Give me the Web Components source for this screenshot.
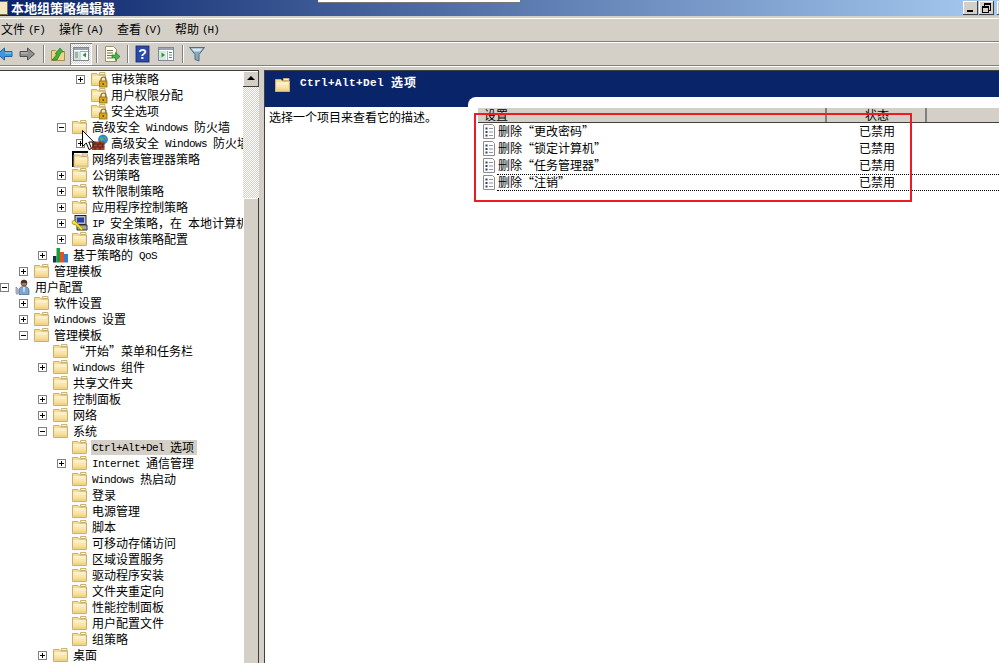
<!DOCTYPE html>
<html lang="zh-CN">
<head>
<meta charset="utf-8">
<title>本地组策略编辑器</title>
<style>
  html, body { margin: 0; height: 100%; overflow: hidden; background: #d4d0c8; }
  body { font: 12px "Noto Sans CJK SC", sans-serif; color: #000; }
</style>
</head>
<body>
<gp-app></gp-app>

<script>
const UI_FONT = `"Noto Sans CJK SC", sans-serif`;
const MIXED_CSS = `
  .l { font-family: "Liberation Mono", monospace; font-size: 11px; letter-spacing: -0.6px; white-space: pre; vertical-align: 1px; }
`;

// SimSun look: latin runs take half the width of a CJK glyph
const mixed = (text) => text.replace(/[\x20-\x7e]+/g, (m) => `<span class="l">${m}</span>`);

const folderBody = `
  <path d="M8.500 1.500h5.500v2H8.500z" fill="#f4f6f4" stroke="#c9b273"/>
  <path d="M.5 2.500h5.500l1.500 1.500h7v10.500H.5z" fill="#f6dd98" stroke="#c9b070"/>
  <path d="M1.500 5h12v3h-12z" fill="#fdf0c4"/>
  <path d="M1.500 8h12v2.500h-12z" fill="#fae6aa"/>
  <path d="M1.500 12.500h12v1h-12z" fill="#ecc878"/>`;

const lockBadge = `
  <path d="M10 10V8.500a2.500 2.500 0 0 1 5 0V10" fill="none" stroke="#7d6a35" stroke-width="1.200"/>
  <rect x="8.500" y="10" width="7.500" height="6" fill="#d8a51c" stroke="#8a6a14" stroke-width=".8"/>
  <rect x="11.500" y="12" width="1.500" height="2" fill="#6b4f0c"/>`;

const ICONS = {
  folder: folderBody,
  lock: folderBody + lockBadge,
  blackfolder: `<path d="M0 0h16v2H2v14H0z" fill="#000"/><g transform="translate(1.500 1.500)">${folderBody}</g>`,
  firewall: `
    <circle cx="12" cy="4.500" r="4.500" fill="#2f8fd8" stroke="#1c5f9c" stroke-width=".6"/>
    <path d="M9 3c2-1.500 3-.5 3.500 1s-2 2-3 1zM13.500 1l2 2-1.500 1z" fill="#57b84a"/>
    <path d="M1 6.500h12.500V15H1z" fill="#a2432c"/>
    <path d="M1 9h12.500M1 12h12.500M4 6.500V9M9 6.500V9M2.500 9v3M7 9v3M11.500 9v3M4 12v3M9 12v3" stroke="#5e2418" fill="none"/>`,
  ip: `
    <rect x="3" y=".5" width="11" height="9" fill="#b8b8c0" stroke="#222"/>
    <rect x="5" y="2.500" width="7" height="5" fill="#2440a8"/>
    <path d="M5 10h10v5H5z" fill="#a8a8a8" stroke="#333"/>
    <path d="M0 6.500l2-1.500 3 3 6 5.500-1.500 2-6-5.500-3-1z" fill="#f5e020" stroke="#8a7c00" stroke-width=".6"/>`,
  qos: `
    <rect x="0" y="9" width="3.500" height="6.500" fill="#16324e"/>
    <rect x="3.500" y="1" width="3.500" height="14.500" fill="#1f9b3a"/>
    <rect x="7" y="5" width="4" height="10.500" fill="#e0532a"/>
    <rect x="11" y="7" width="4" height="8.500" fill="#2f7fd0"/>`,
  user: `
    <circle cx="9" cy="4" r="3" fill="#a8795a" stroke="#4a3020" stroke-width=".7"/>
    <path d="M9 1a3 3 0 0 1 3 3H6a3 3 0 0 1 3-3z" fill="#4a3020"/>
    <path d="M4 15.500v-4c0-3 2-4 5-4s5 1 5 4v4z" fill="#7ea6d4" stroke="#41618c" stroke-width=".7"/>
    <path d="M8 8h2l-.5 5h-1z" fill="#dde7f2"/>
    <path d="M1 8l2 2v4l-1 1.500L1 14v-4z" fill="#c8ccd0" stroke="#667" stroke-width=".6"/>`,
  doc: `
    <path d="M1.500 .5h9l2 2v12h-11z" fill="#fdfdfd" stroke="#8c8c8c"/>
    <path d="M3.500 3.500h2v2h-2zM3.500 7h2v2h-2zM3.500 10.500h2v2h-2z" fill="#33405c"/>
    <path d="M7 4.500h4M7 8h4M7 11.500h4" stroke="#8b94b0" fill="none"/>`,
  back: `<path d="M.5 8l7-6v3.500h7.500v5H7.500V14z" fill="#3f96dc" stroke="#27609c"/><path d="M8 6.500h6.500v1H8z" fill="#9bd0f4"/>`,
  forward: `<path d="M15.500 8l-7-6v3.500H1v5h7.500V14z" fill="#8e8e8e" stroke="#4e4e4e"/><path d="M2 6.500h7v1H2z" fill="#c4c4c4"/>`,
  up: `
    <path d="M1.500 4.500h4l1 1h8v9h-13z" fill="#f1d48c" stroke="#a98f4e"/>
    <path d="M2 14l5-6H5l5-6 3.500 4h-2L7 14z" fill="#3fae3a" stroke="#1e7a22" stroke-width=".6"/>`,
  treepane: `
    <rect x=".5" y="1.500" width="15" height="13" fill="#fff" stroke="#7a8a96"/>
    <path d="M1 2h14v2H1z" fill="#9aa6ae"/>
    <path d="M1 5h5v9H1z" fill="#d6e4d8"/><path d="M2 7h3M2 9h3M2 11h3" stroke="#68808c"/>
    <path d="M7 5.500h8M7 5.500v9" stroke="#a0acb4" fill="none"/>
    <path d="M13 6.500v5L9.500 9z" fill="#1e9b34"/>`,
  export: `
    <path d="M1.500 .5h8l3 3v12h-11z" fill="#fdfbe8" stroke="#97917a"/>
    <path d="M3 4.500h6M3 7h6M3 9.500h5M3 12h5" stroke="#77755f" fill="none"/>
    <path d="M8 9h3.500V6.500l4.500 4-4.500 4V12H8z" fill="#47b348" stroke="#1e7a22" stroke-width=".7"/>`,
  help: `
    <rect x="2" y="0" width="13" height="16" fill="#2a4aa6" stroke="#13286c" stroke-width=".8"/>
    <text x="8.500" y="13" text-anchor="middle" font-family="Liberation Sans" font-weight="700" font-size="14" fill="#f2f4ff">?</text>`,
  panel: `
    <rect x=".5" y="1.500" width="15" height="13" fill="#fff" stroke="#7a8a96"/>
    <path d="M1 2h14v2H1z" fill="#9aa6ae"/>
    <path d="M1 5h7v9H1z" fill="#dbe6dc"/><path d="M3.500 6.500v5L7 9z" fill="#1e9b34"/>
    <path d="M9.500 5v9" stroke="#a0acb4"/><path d="M11 6.500h3M11 9h3M11 11.500h3" stroke="#68808c" fill="none"/>`,
  filter: `
    <path d="M.5 1.500h15L10 8.500V15l-4-1.500v-5z" fill="#8aa8bc" stroke="#4d6e84"/>
    <path d="M2.500 2.500h11l-2.500 3H5z" fill="#d9e6ee"/>`,
};

class GpIcon extends HTMLElement {
  connectedCallback() {
    if (this.shadowRoot) return;
    this.attachShadow({ mode: "open" });
    const size = this.getAttribute("size") || 16;
    this.shadowRoot.innerHTML = `
      <style>
        :host { display: block; width: ${size}px; height: ${size}px; flex: none; }
        svg { display: block; overflow: visible; }
      </style>
      <svg width="${size}" height="${size}" viewBox="0 0 16 16">${ICONS[this.getAttribute("name")] || ""}</svg>
    `;
  }
}
customElements.define("gp-icon", GpIcon);

class GpTitlebar extends HTMLElement {
  constructor() {
    super();
    this.attachShadow({ mode: "open" }).innerHTML = `
      <style>
        :host {
          display: flex;
          align-items: center;
          height: 16px;
          padding-left: 11px;
          position: relative;
          flex: none;
          background: linear-gradient(90deg, #0a246a, #a6caf0);
          color: #fff;
          font: 700 13px/14px ${UI_FONT};
        }
        .doc {
          position: absolute;
          left: -5px;
          top: 1px;
          width: 13px;
          height: 14px;
          background: #f3e7c2;
          box-shadow: inset 0 0 0 1px #7d6f4a;
        }
        .sliver {
          position: absolute;
          left: 318px;
          top: 0;
          width: 202px;
          height: 2px;
          background: #fff;
          box-shadow: 0 1px #777;
        }
        .buttons {
          display: flex;
          flex: none;
          margin-left: auto;
          margin-right: -13px;
          gap: 1px;
        }
        .btn {
          flex: none;
          width: 15px;
          height: 14px;
          background: #d4d0c8;
          box-shadow: inset -1px -1px #404040, inset 1px 1px #fff;
          position: relative;
        }
        .btn:last-child { margin-left: 2px; }
        .min::after { content: ""; position: absolute; left: 4px; top: 9px; width: 6px; height: 2px; background: #000; }
        .restore::before { content: ""; position: absolute; left: 5px; top: 2px; width: 5px; height: 5px; border: 1px solid #000; border-top-width: 2px; }
        .restore::after { content: ""; position: absolute; left: 3px; top: 5px; width: 5px; height: 4px; border: 1px solid #000; border-top-width: 2px; background: #d4d0c8; }
      </style>
      <span class="doc"></span>
      <span class="sliver"></span>
      <span>本地组策略编辑器</span>
      <span class="buttons">
        <span class="btn min"></span>
        <span class="btn restore"></span>
        <span class="btn"></span>
      </span>
    `;
  }
}
customElements.define("gp-titlebar", GpTitlebar);

class GpMenubar extends HTMLElement {
  constructor() {
    super();
    const items = ["文件(F)", "操作(A)", "查看(V)", "帮助(H)"];
    this.attachShadow({ mode: "open" }).innerHTML = `
      <style>
        ${MIXED_CSS}
        :host {
          display: flex;
          align-items: center;
          gap: 15px;
          height: 23px;
          padding: 2px 0 0 1px;
          flex: none;
          background: #d4d0c8;
          box-shadow: inset 0 2px #d4d0c8, inset 0 3px #fff;
          border-bottom: 1px solid #808080;
          font: 12px/15px ${UI_FONT};
        }
        span.m { width: 43px; white-space: nowrap; }
        .l { margin-left: 3px; letter-spacing: -1px; }
      </style>
      ${items.map((t) => `<span class="m">${mixed(t)}</span>`).join("")}
    `;
  }
}
customElements.define("gp-menubar", GpMenubar);

class GpToolbar extends HTMLElement {
  constructor() {
    super();
    this.attachShadow({ mode: "open" }).innerHTML = `
      <style>
        :host {
          display: flex;
          align-items: center;
          height: 22px;
          flex: none;
          background: #d4d0c8;
          border-top: 1px solid #fff;
          border-bottom: 1px solid #808080;
        }
        .sep { width: 1px; height: 18px; background: #808080; border-right: 1px solid #fff; flex: none; }
        .pressed {
          width: 22px;
          height: 22px;
          display: flex;
          align-items: center;
          justify-content: center;
          flex: none;
          background: repeating-conic-gradient(#d4d0c8 0 25%, #fff 0 50%) 0 0 / 2px 2px;
          box-shadow: inset 1px 1px #808080, inset -1px -1px #fff;
        }
      </style>
      <gp-icon name="back" style="margin-left:-3px"></gp-icon>
      <gp-icon name="forward" style="margin-left:6px"></gp-icon>
      <span class="sep" style="margin-left:8px"></span>
      <gp-icon name="up" style="margin-left:5px"></gp-icon>
      <span class="pressed" style="margin-left:4px"><gp-icon name="treepane"></gp-icon></span>
      <span class="sep" style="margin-left:4px"></span>
      <gp-icon name="export" style="margin-left:6px"></gp-icon>
      <span class="sep" style="margin-left:7px"></span>
      <gp-icon name="help" style="margin-left:5px"></gp-icon>
      <gp-icon name="panel" style="margin-left:8px"></gp-icon>
      <span class="sep" style="margin-left:8px"></span>
      <gp-icon name="filter" style="margin-left:5px"></gp-icon>
    `;
  }
}
customElements.define("gp-toolbar", GpToolbar);

class GpTreeRow extends HTMLElement {
  connectedCallback() {
    if (this.shadowRoot) return;
    this.attachShadow({ mode: "open" });
    const depth = +this.getAttribute("depth") || 0;
    const toggle = this.getAttribute("toggle");
    const icon = this.getAttribute("icon") || "folder";
    const selected = this.hasAttribute("selected");
    this.shadowRoot.innerHTML = `
      <style>
        ${MIXED_CSS}
        :host {
          display: flex;
          align-items: center;
          height: 16px;
          padding-left: ${depth * 19}px;
          white-space: nowrap;
          font: 12px/13px ${UI_FONT};
        }
        .slot { width: 15px; flex: none; }
        .box {
          display: block;
          width: 7px;
          height: 7px;
          border: 1px solid #808080;
          background: #fff;
          position: relative;
        }
        .box::before { content: ""; position: absolute; left: 1px; top: 3px; width: 5px; height: 1px; background: #000; }
        .plus::after { content: ""; position: absolute; left: 3px; top: 1px; width: 1px; height: 5px; background: #000; }
        .label { margin-left: 3px; padding: 0 1px; height: 15px; }
        .label.sel { background: #d4d0c8; padding-right: 3px; }
      </style>
      <span class="slot">${toggle ? `<span class="box ${toggle === "+" ? "plus" : ""}"></span>` : ""}</span>
      <gp-icon name="${icon}"></gp-icon>
      <span class="label ${selected ? "sel" : ""}">${mixed(this.getAttribute("label"))}</span>
    `;
  }
}
customElements.define("gp-tree-row", GpTreeRow);

class GpScrollbar extends HTMLElement {
  constructor() {
    super();
    this.attachShadow({ mode: "open" }).innerHTML = `
      <style>
        :host {
          display: flex;
          flex-direction: column;
          width: 16px;
          flex: none;
          background: repeating-conic-gradient(#d4d0c8 0 25%, #fff 0 50%) 0 0 / 2px 2px;
        }
        .up, .thumb {
          background: #d4d0c8;
          box-shadow: inset -1px -1px #404040, inset 1px 1px #fff;
          flex: none;
        }
        .up { height: 16px; position: relative; }
        .up::after {
          content: "";
          position: absolute;
          left: 4px;
          top: 5px;
          border: 4px solid transparent;
          border-top: 0;
          border-bottom: 4px solid #000;
        }
        .track { height: 111px; flex: none; }
        .thumb { flex: 1; box-shadow: inset -1px 0 #404040, inset 1px 1px #fff; }
      </style>
      <div class="up"></div>
      <div class="track"></div>
      <div class="thumb"></div>
    `;
  }
}
customElements.define("gp-scrollbar", GpScrollbar);

// [depth, toggle, icon, label]
const TREE = [
  [4, "+", "lock", "审核策略"],
  [4, "", "lock", "用户权限分配"],
  [4, "", "lock", "安全选项"],
  [3, "-", "folder", "高级安全 Windows 防火墙"],
  [4, "+", "firewall", "高级安全 Windows 防火墙"],
  [3, "", "blackfolder", "网络列表管理器策略"],
  [3, "+", "folder", "公钥策略"],
  [3, "+", "folder", "软件限制策略"],
  [3, "+", "folder", "应用程序控制策略"],
  [3, "+", "ip", "IP 安全策略，在 本地计算机"],
  [3, "+", "folder", "高级审核策略配置"],
  [2, "+", "qos", "基于策略的 QoS"],
  [1, "+", "folder", "管理模板"],
  [0, "-", "user", "用户配置"],
  [1, "+", "folder", "软件设置"],
  [1, "+", "folder", "Windows 设置"],
  [1, "-", "folder", "管理模板"],
  [2, "", "folder", "“开始”菜单和任务栏"],
  [2, "+", "folder", "Windows 组件"],
  [2, "", "folder", "共享文件夹"],
  [2, "+", "folder", "控制面板"],
  [2, "+", "folder", "网络"],
  [2, "-", "folder", "系统"],
  [3, "", "folder", "Ctrl+Alt+Del 选项", true],
  [3, "+", "folder", "Internet 通信管理"],
  [3, "", "folder", "Windows 热启动"],
  [3, "", "folder", "登录"],
  [3, "", "folder", "电源管理"],
  [3, "", "folder", "脚本"],
  [3, "", "folder", "可移动存储访问"],
  [3, "", "folder", "区域设置服务"],
  [3, "", "folder", "驱动程序安装"],
  [3, "", "folder", "文件夹重定向"],
  [3, "", "folder", "性能控制面板"],
  [3, "", "folder", "用户配置文件"],
  [3, "", "folder", "组策略"],
  [2, "+", "folder", "桌面"],
];

class GpTree extends HTMLElement {
  constructor() {
    super();
    const rows = TREE.map(([d, t, i, l, s]) =>
      `<gp-tree-row depth="${d}" toggle="${t}" icon="${i}" label="${l}" ${s ? "selected" : ""}></gp-tree-row>`
    ).join("");
    this.attachShadow({ mode: "open" }).innerHTML = `
      <style>
        :host {
          display: flex;
          width: 259px;
          flex: none;
          position: relative;
          overflow: hidden;
          background: #fff;
          border-top: 1px solid #404040;
        }
        .rows { width: 243px; flex: none; overflow: hidden; }
        .cursor { position: absolute; left: 82px; top: 59px; display: block; }
      </style>
      <div class="rows">${rows}</div>
      <gp-scrollbar></gp-scrollbar>
      <svg class="cursor" width="12" height="21" viewBox="0 0 12 21">
        <path d="M.5.500v16l3.800-3.500 2.700 6.500 2.500-1-2.700-6.500h5z" fill="#fff" stroke="#000"/>
      </svg>
    `;
  }
}
customElements.define("gp-tree", GpTree);

class GpListRow extends HTMLElement {
  connectedCallback() {
    if (this.shadowRoot) return;
    this.attachShadow({ mode: "open" });
    const focused = this.hasAttribute("focused");
    this.shadowRoot.innerHTML = `
      <style>
        ${MIXED_CSS}
        :host {
          display: flex;
          align-items: center;
          height: 17px;
          padding-left: 4px;
          white-space: nowrap;
          font: 12px/13px ${UI_FONT};
        }
        gp-icon { margin-right: -1px; }
        .body {
          display: flex;
          align-items: flex-start;
          flex: 1;
          height: 15px;
          padding-left: 1px;
          ${focused ? "border-top: 1px dotted #000; border-bottom: 1px dotted #000;" : "border-top: 1px solid transparent; border-bottom: 1px solid transparent;"}
        }
        .name { width: 361px; flex: none; }
      </style>
      <gp-icon name="doc"></gp-icon>
      <div class="body">
        <span class="name">${mixed(this.getAttribute("name"))}</span>
        <span>${this.getAttribute("state")}</span>
      </div>
    `;
  }
}
customElements.define("gp-list-row", GpListRow);

class GpDetails extends HTMLElement {
  constructor() {
    super();
    this.attachShadow({ mode: "open" }).innerHTML = `
      <style>
        ${MIXED_CSS}
        :host {
          display: flex;
          flex-direction: column;
          flex: 1;
          min-width: 0;
          margin-left: 5px;
          background: #fff;
          border-top: 1px solid #404040;
          box-shadow: inset 1px 0 #404040;
          padding-left: 1px;
          overflow: hidden;
          font: 12px/15px ${UI_FONT};
        }
        .banner {
          display: flex;
          align-items: flex-start;
          gap: 9px;
          height: 30px;
          padding: 6px 0 0 10px;
          background: #0a246a;
          color: #fff;
          font-weight: 700;
          flex: none;
        }
        .banner .l { font-weight: 700; letter-spacing: 0.4px; }
        .banner .title { letter-spacing: 1px; line-height: 10px; }
        .content { display: flex; flex: 1; min-height: 0; }
        .desc { width: 203px; flex: none; padding: 2px 0 0 4px; box-sizing: border-box; white-space: nowrap; }
        .list {
          flex: 1;
          position: relative;
          margin-top: -10px;
          padding: 11px 0 0 10px;
          background: #fff;
          border-top-left-radius: 8px;
        }
        .head {
          display: flex;
          height: 14px;
          background: #d4d0c8;
          border-bottom: 1px solid #404040;
          line-height: 14px;
        }
        .head span { flex: none; box-sizing: border-box; box-shadow: inset -2px 0 #808080, inset -1px 0 #fff; height: 14px; }
        .c1 { width: 349px; padding-left: 6px; }
        .c2 { width: 100px; text-align: center; }
        .mark {
          position: absolute;
          left: 6px;
          top: 16px;
          width: 434px;
          height: 85px;
          border: 2px solid #ed1c24;
          pointer-events: none;
        }
      </style>
      <div class="banner">
        <gp-icon name="folder"></gp-icon>
        <span class="title">${mixed("Ctrl+Alt+Del 选项")}</span>
      </div>
      <div class="content">
        <div class="desc">选择一个项目来查看它的描述。</div>
        <div class="list">
          <div class="head"><span class="c1">设置</span><span class="c2">状态</span></div>
          <gp-list-row name="删除“更改密码”" state="已禁用"></gp-list-row>
          <gp-list-row name="删除“锁定计算机”" state="已禁用"></gp-list-row>
          <gp-list-row name="删除“任务管理器”" state="已禁用"></gp-list-row>
          <gp-list-row name="删除“注销”" state="已禁用" focused></gp-list-row>
          <div class="mark"></div>
        </div>
      </div>
    `;
  }
}
customElements.define("gp-details", GpDetails);

class GpApp extends HTMLElement {
  constructor() {
    super();
    this.attachShadow({ mode: "open" }).innerHTML = `
      <style>
        :host { display: flex; flex-direction: column; height: 100vh; overflow: hidden; background: #d4d0c8; }
        .gap { height: 4px; flex: none; background: #d4d0c8; box-shadow: inset 0 1px #fff; }
        .main { display: flex; flex: 1; min-height: 0; }
      </style>
      <gp-titlebar></gp-titlebar>
      <gp-menubar></gp-menubar>
      <gp-toolbar></gp-toolbar>
      <div class="gap"></div>
      <div class="main">
        <gp-tree></gp-tree>
        <gp-details></gp-details>
      </div>
    `;
  }
}
customElements.define("gp-app", GpApp);
</script>
</body>
</html>
